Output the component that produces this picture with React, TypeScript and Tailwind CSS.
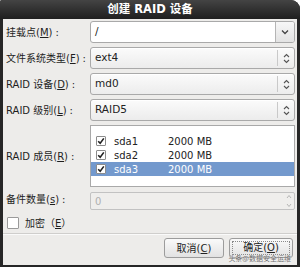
import React from "react";

const FONT = { fontFamily: '"DejaVu Sans", "Noto Sans CJK SC", sans-serif' };

function Label({ text, k }: { text: string; k: string }) {
  return (
    <div className="flex items-center text-[10px] text-[#1e1e1e] whitespace-nowrap">
      {text}(<span className="underline underline-offset-1">{k}</span>)<span className="ml-[3px]">:</span>
    </div>
  );
}

function UpDown() {
  return (
    <svg width="7" height="11" viewBox="0 0 7 11" className="text-[#555]">
      <path d="M1 4 L3.5 1.5 L6 4" fill="none" stroke="currentColor" strokeWidth="1.1" />
      <path d="M1 7 L3.5 9.5 L6 7" fill="none" stroke="currentColor" strokeWidth="1.1" />
    </svg>
  );
}

function ComboButton({ value }: { value: string }) {
  return (
    <div className="h-[22px] flex items-center rounded-[3px] border border-[#a9a9a9] bg-gradient-to-b from-[#fbfbfb] to-[#ececec] shadow-[inset_0_1px_0_#ffffff]">
      <span className="flex-1 pl-[4px] text-[10.5px] text-[#222]">{value}</span>
      <div className="w-px h-[16px] bg-[#c9c9c9]" />
      <div className="w-[16px] flex items-center justify-center">
        <UpDown />
      </div>
    </div>
  );
}

function Check({ checked }: { checked: boolean }) {
  return (
    <div className="w-[10px] h-[10px] border border-[#8c8c8c] bg-white flex items-center justify-center rounded-[1px]">
      {checked && (
        <svg width="8" height="8" viewBox="0 0 8 8">
          <path d="M1.2 4.2 L3.2 6.3 L6.8 1.4" fill="none" stroke="#222" strokeWidth="1.6" />
        </svg>
      )}
    </div>
  );
}

function Row({ name, selected }: { name: string; selected?: boolean }) {
  return (
    <div
      className={`h-[14px] flex items-center pl-[5px] text-[10px] ${
        selected ? "bg-[#7399cd] text-white" : "text-[#222]"
      }`}
    >
      <Check checked />
      <span className="ml-[8px] w-[54px]">{name}</span>
      <span>2000 MB</span>
    </div>
  );
}

export default function App() {
  return (
    <div className="w-[300px] h-[269px] bg-white relative overflow-hidden" style={FONT}>
      <div className="w-[300px] h-[267px] flex flex-col bg-[#262626] rounded-tr-[9px] rounded-tl-[2px] overflow-hidden">
        <div className="h-[19px] shrink-0 flex items-center justify-center text-white font-bold text-[11.5px] bg-gradient-to-b from-[#444444] to-[#1f1f1f]">
          创建 RAID 设备
        </div>
        <div className="flex-1 mx-[3px] mb-[2px] bg-[#edecea] flex flex-col">
          <div className="grid grid-cols-[84px_1fr] pl-[3px] pr-[2px] pt-[2px] gap-y-[4px]">
            <Label text="挂载点" k="M" />
            <div className="h-[22px] flex rounded-[3px] border border-[#a9a9a9] bg-white overflow-hidden">
              <span className="flex-1 pl-[4px] flex items-center text-[10.5px] text-[#222]">/</span>
              <div className="w-[19px] border-l border-[#b5b5b5] bg-gradient-to-b from-[#f7f7f7] to-[#e3e3e3] flex items-center justify-center">
                <svg width="8" height="6" viewBox="0 0 8 6">
                  <path d="M1 1.5 L4 4.5 L7 1.5" fill="none" stroke="#444" strokeWidth="1.3" />
                </svg>
              </div>
            </div>

            <Label text="文件系统类型" k="F" />
            <ComboButton value="ext4" />

            <Label text="RAID 设备" k="D" />
            <ComboButton value="md0" />

            <Label text="RAID 级别" k="L" />
            <ComboButton value="RAID5" />

            <Label text="RAID 成员" k="R" />
            <div className="h-[62px] border border-[#a9a9a9] bg-white pt-[8px]">
              <Row name="sda1" />
              <Row name="sda2" />
              <Row name="sda3" selected />
            </div>

            <div className="mt-[1px]">
              <Label text="备件数量" k="s" />
            </div>
            <div className="mt-[1px] h-[18px] flex items-center rounded-[2px] border border-[#c2c2c2] bg-[#efeeec]">
              <span className="flex-1 pl-[4px] text-[10px] text-[#b0b0b0]">0</span>
              <div className="w-[9px] mr-[1px] h-[14px] flex flex-col items-center justify-between">
                <svg width="6" height="5" viewBox="0 0 6 5">
                  <path d="M1 4 L3 1.5 L5 4" fill="none" stroke="#b5b5b5" strokeWidth="1" />
                </svg>
                <svg width="6" height="5" viewBox="0 0 6 5">
                  <path d="M1 1 L3 3.5 L5 1" fill="none" stroke="#b5b5b5" strokeWidth="1" />
                </svg>
              </div>
            </div>
          </div>

          <div className="mt-[6px] h-[14px] pl-[4px] flex items-center text-[10px] text-[#1e1e1e]">
            <div className="w-[12px] h-[12px] border border-[#9a9a9a] bg-white rounded-[1px]" />
            <span className="ml-[6px]">加密（<span className="underline underline-offset-1">E</span>）</span>
          </div>

          <div className="mt-[3px] h-px bg-[#cfcecc]" />
          <div className="h-px bg-[#fafafa]" />

          <div className="mt-[3px] flex justify-end gap-[5px] pr-[4px]">
            <div className="w-[60px] h-[20px] rounded-[3px] border border-[#9c9c9c] bg-gradient-to-b from-[#fafafa] to-[#e2e2e2] flex items-center justify-center text-[10px] text-[#222]">
              取消(<span className="underline underline-offset-1">C</span>)
            </div>
            <div className="w-[64px] h-[20px] rounded-[3px] border border-[#9c9c9c] bg-gradient-to-b from-[#fafafa] to-[#e2e2e2] flex items-start pt-[2px] justify-center text-[10px] leading-[13px] text-[#222] relative">
              <div className="absolute inset-[2px] border border-dotted border-[#8a8a8a]" />
              确定(<span className="underline underline-offset-1">O</span>)
            </div>
          </div>
        </div>
      </div>
      <div
        className="absolute right-[9px] top-[254px] text-[7px] leading-[8px] text-[#6d6d6d]"
        style={{ fontFamily: '"Noto Sans CJK SC", sans-serif', textShadow: "0 0 2px #fff" }}
      >
        头条@数据安全运维
      </div>
    </div>
  );
}
